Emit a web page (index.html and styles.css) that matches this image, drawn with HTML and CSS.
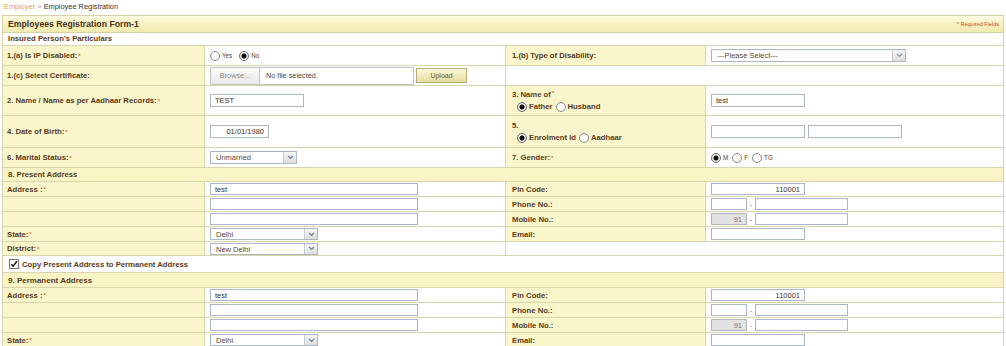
FILE: index.html
```html
<!DOCTYPE html>
<html lang="en">
<head>
    <meta charset="UTF-8">
    <title>Employee Registration</title>
    <link rel="stylesheet" href="styles.css">
</head>
<body>
    <div class="crumb"><a href="#">Employer</a> <span class="sep">&gt;</span> Employee Registration</div>

    <div class="form-box">
        <div class="form-title">
            <h1>Employees Registration Form-1</h1>
            <span class="req-note">* Required Fields</span>
        </div>
        <div class="sub-title">Insured Person's Particulars</div>

        <div class="row r20">
            <div class="cell lbl">1.(a) Is IP Disabled:<i class="req">*</i></div>
            <div class="cell fld opts-inline">
                <label class="opt"><input type="radio" name="dis"> Yes</label>
                <label class="opt"><input type="radio" name="dis" checked> No</label>
            </div>
            <div class="cell lbl">1.(b) Type of Disability:</div>
            <div class="cell fld">
                <div class="sel w195"><span class="val">---Please Select---</span><span class="arr"><svg width="7" height="5" viewBox="0 0 7 5"><path d="M1 1l2.5 2.5L6 1" fill="none" stroke="#8a9bb0" stroke-width="1.2"/></svg></span></div>
            </div>
        </div>

        <div class="row r20">
            <div class="cell lbl">1.(c) Select Certificate:</div>
            <div class="cell fld">
                <div class="file"><span class="browse">Browse...</span><span class="fname">No file selected.</span></div>
                <button class="upload">Upload</button>
            </div>
            <div class="cell fld span2"></div>
        </div>

        <div class="row r30">
            <div class="cell lbl">2. Name / Name as per Aadhaar Records:<i class="req">*</i></div>
            <div class="cell fld"><input class="txt w94" value="TEST"></div>
            <div class="cell lbl stack">
                <span>3. Name of<i class="req">*</i></span>
                <span class="opts">
                    <label class="opt big"><input type="radio" name="rel" checked> Father</label>
                    <label class="opt big"><input type="radio" name="rel"> Husband</label>
                </span>
            </div>
            <div class="cell fld"><input class="txt w94" value="test"></div>
        </div>

        <div class="row r32">
            <div class="cell lbl">4. Date of Birth:<i class="req">*</i></div>
            <div class="cell fld"><input class="txt w59 right" value="01/01/1980"></div>
            <div class="cell lbl stack">
                <span>5.</span>
                <span class="opts">
                    <label class="opt big"><input type="radio" name="idt" checked> Enrolment Id</label>
                    <label class="opt big"><input type="radio" name="idt"> Aadhaar</label>
                </span>
            </div>
            <div class="cell fld">
                <input class="txt w94">
                <input class="txt w94 gap">
            </div>
        </div>

        <div class="row r20">
            <div class="cell lbl">6. Marital Status: <i class="req">*</i></div>
            <div class="cell fld">
                <div class="sel w87"><span class="val">Unmarried</span><span class="arr"><svg width="7" height="5" viewBox="0 0 7 5"><path d="M1 1l2.5 2.5L6 1" fill="none" stroke="#6a7f99" stroke-width="1.2"/></svg></span></div>
            </div>
            <div class="cell lbl">7. Gender:<i class="req">*</i></div>
            <div class="cell fld opts-gender">
                <label class="opt"><input type="radio" name="gen" checked> M</label>
                <label class="opt"><input type="radio" name="gen"> F</label>
                <label class="opt"><input type="radio" name="gen"> TG</label>
            </div>
        </div>

        <div class="section h14">8. Present Address</div>

        <div class="row r15">
            <div class="cell lbl">Address :<i class="req">*</i></div>
            <div class="cell fld"><input class="txt sm w208" value="test"></div>
            <div class="cell lbl">Pin Code:</div>
            <div class="cell fld"><input class="txt sm w94 right" value="110001"></div>
        </div>
        <div class="row r15">
            <div class="cell lbl"></div>
            <div class="cell fld"><input class="txt sm w208"></div>
            <div class="cell lbl">Phone No.:</div>
            <div class="cell fld"><input class="txt sm w37"><span class="dash">-</span><input class="txt sm w93"></div>
        </div>
        <div class="row r15">
            <div class="cell lbl"></div>
            <div class="cell fld"><input class="txt sm w208"></div>
            <div class="cell lbl">Mobile No.:</div>
            <div class="cell fld"><input class="txt sm w37 right off" value="91" disabled><span class="dash">-</span><input class="txt sm w93"></div>
        </div>
        <div class="row r15">
            <div class="cell lbl">State:<i class="req">*</i></div>
            <div class="cell fld">
                <div class="sel sm w108"><span class="val">Delhi</span><span class="arr"><svg width="7" height="5" viewBox="0 0 7 5"><path d="M1 1l2.5 2.5L6 1" fill="none" stroke="#6a7f99" stroke-width="1.2"/></svg></span></div>
            </div>
            <div class="cell lbl">Email:</div>
            <div class="cell fld"><input class="txt sm w94"></div>
        </div>
        <div class="row r14">
            <div class="cell lbl">District:<i class="req">*</i></div>
            <div class="cell fld">
                <div class="sel sm w108"><span class="val">New Delhi</span><span class="arr"><svg width="7" height="5" viewBox="0 0 7 5"><path d="M1 1l2.5 2.5L6 1" fill="none" stroke="#6a7f99" stroke-width="1.2"/></svg></span></div>
            </div>
            <div class="cell fld span2"></div>
        </div>

        <div class="copy-row">
            <span class="check"><svg width="8" height="8" viewBox="0 0 8 8"><path d="M1.2 4.2l1.9 2L6.9 1.2" fill="none" stroke="#111" stroke-width="1.5"/></svg></span>
            Copy Present Address to Permanent Address
        </div>

        <div class="section h15 plain">9. Permanent Address</div>

        <div class="row r15">
            <div class="cell lbl">Address :<i class="req">*</i></div>
            <div class="cell fld"><input class="txt sm w208" value="test"></div>
            <div class="cell lbl">Pin Code:</div>
            <div class="cell fld"><input class="txt sm w94 right" value="110001"></div>
        </div>
        <div class="row r15">
            <div class="cell lbl"></div>
            <div class="cell fld"><input class="txt sm w208"></div>
            <div class="cell lbl">Phone No.:</div>
            <div class="cell fld"><input class="txt sm w37"><span class="dash">-</span><input class="txt sm w93"></div>
        </div>
        <div class="row r15">
            <div class="cell lbl"></div>
            <div class="cell fld"><input class="txt sm w208"></div>
            <div class="cell lbl">Mobile No.:</div>
            <div class="cell fld"><input class="txt sm w37 right off" value="91" disabled><span class="dash">-</span><input class="txt sm w93"></div>
        </div>
        <div class="row r15">
            <div class="cell lbl">State:<i class="req">*</i></div>
            <div class="cell fld">
                <div class="sel sm w108"><span class="val">Delhi</span><span class="arr"><svg width="7" height="5" viewBox="0 0 7 5"><path d="M1 1l2.5 2.5L6 1" fill="none" stroke="#6a7f99" stroke-width="1.2"/></svg></span></div>
            </div>
            <div class="cell lbl">Email:</div>
            <div class="cell fld"><input class="txt sm w94"></div>
        </div>
    </div>
</body>
</html>
```

FILE: styles.css
```css
* {
    margin: 0;
    padding: 0;
    box-sizing: border-box;
}

body {
    font-family: "Liberation Sans", Arial, sans-serif;
    font-size: 7.7px;
    color: #5a3a1a;
    background: #fff;
}

.crumb {
    height: 15px;
    padding: 1px 4px 0;
    font-size: 7.4px;
    line-height: 11px;
    color: #333;
}

.crumb a {
    color: #eea23a;
    text-decoration: none;
}

.crumb .sep {
    color: #999;
}

.form-box {
    margin: 0 2px;
}

.form-title {
    height: 18px;
    display: flex;
    align-items: center;
    justify-content: space-between;
    padding: 0 4px 0 5px;
    border: 1px solid #d6d1a6;
    background: linear-gradient(#fdfbe4, #f5f0be 55%, #f1ebb0);
}

.form-title h1 {
    font-size: 8.7px;
    font-weight: bold;
    color: #4b2f15;
}

.req-note {
    font-size: 5.5px;
    color: #d2461a;
}

.sub-title {
    height: 13px;
    line-height: 12px;
    padding-left: 5px;
    font-weight: bold;
    border-left: 1px solid #d8d4ab;
    border-right: 1px solid #d8d4ab;
    border-bottom: 1px solid #d8d4ab;
}

.row {
    display: grid;
    grid-template-columns: 202px 301px 200px 1fr;
    border-bottom: 1px solid #d8d4ab;
    border-right: 1px solid #d8d4ab;
}

.r14 { height: 14px; }
.r15 { height: 15px; }
.r20 { height: 20px; }
.r30 { height: 30px; }
.r32 { height: 32px; }

.cell {
    display: flex;
    align-items: center;
    padding: 0 4px;
    border-left: 1px solid #d8d4ab;
    white-space: nowrap;
}

.cell.fld {
    padding-left: 5px;
}

.row .cell:nth-child(3) {
    padding-left: 6px;
}

.lbl {
    background: #f9f6cb;
    font-weight: bold;
}

.fld {
    background: #fff;
}

.span2 {
    grid-column: span 2;
}

.stack {
    flex-direction: column;
    align-items: flex-start;
    justify-content: center;
    gap: 3px;
}

.req {
    font-style: normal;
    font-size: 6px;
    color: #d86a3a;
    vertical-align: top;
    margin-left: 1px;
}

/* radios */
.opt {
    display: inline-flex;
    align-items: center;
    gap: 2px;
    margin-right: 5px;
    font-size: 6.3px;
    color: #5a3a1a;
}

.opts-inline {
    padding-left: 8px;
}

.opts-inline .opt {
    margin-right: 7px;
}

.opts-gender {
    padding-left: 12px;
}

.opts-gender .opt {
    margin-right: 4px;
}

.opt.big {
    font-size: 7.7px;
    font-weight: bold;
    margin-right: 3px;
}

.opts {
    display: flex;
    padding-left: 5px;
}

.opt input {
    appearance: none;
    width: 10px;
    height: 10px;
    border: 1px solid #8d8d8d;
    border-radius: 50%;
    background: radial-gradient(circle at 50% 40%, #fff 40%, #e9e9e9 100%);
}

.opt input:checked {
    background: radial-gradient(circle, #111 0 2.2px, #e2e2e2 2.8px, #fafafa 100%);
    border-color: #6d6d6d;
}

/* text boxes */
.txt {
    height: 13px;
    border: 1px solid #a9b6c4;
    font-family: inherit;
    font-size: 7.5px;
    color: #3c3228;
    padding: 0 4px;
    background: #fff;
}

.txt.sm {
    height: 12px;
}

.txt.right {
    text-align: right;
}

.txt.off {
    background: #e2e2e2;
    border-color: #b4b4b4;
    color: #777;
}

.txt.gap {
    margin-left: 3px;
}

.w37 { width: 36px; }
.w59 { width: 59px; }
.w87 { width: 87px; }
.w93 { width: 93px; }
.w94 { width: 94px; }
.w108 { width: 108px; }
.w195 { width: 195px; }
.w208 { width: 208px; }

.dash {
    margin: 0 3px;
    font-size: 7px;
    color: #777;
}

/* select boxes */
.sel {
    display: flex;
    height: 13px;
    border: 1px solid #a9b6c4;
    background: #fff;
    font-size: 7.5px;
    color: #5c4a38;
}

.sel.sm {
    height: 12px;
}

.sel .val {
    flex: 1;
    padding-left: 5px;
    line-height: 11px;
}

.sel .arr {
    width: 13px;
    display: flex;
    align-items: center;
    justify-content: center;
    border-left: 1px solid #c6ccd4;
    background: linear-gradient(#f6f6f6, #dedede);
}

/* file picker */
.file {
    display: flex;
    height: 18px;
    width: 204px;
    border: 1px solid #c2c2c2;
    font-size: 7.3px;
}

.browse {
    width: 49px;
    display: flex;
    align-items: center;
    justify-content: center;
    color: #8a8a8a;
    border-right: 1px solid #c8c8c8;
    background: linear-gradient(#fbfbfb, #e9e9e9);
}

.fname {
    padding-left: 6px;
    line-height: 16px;
    color: #4a4a4a;
}

.upload {
    margin-left: 2px;
    width: 51px;
    height: 15px;
    border: 1px solid #b6ad78;
    background: linear-gradient(#fbf8da, #e5dd9c);
    font-family: inherit;
    font-size: 7px;
    color: #6a5a2a;
}

/* sections */
.section {
    display: flex;
    align-items: center;
    padding-left: 5px;
    font-weight: bold;
    background: #f8f4c6;
    border: 1px solid #d8d4ab;
    border-top: none;
}

.section.h14 { height: 14px; }
.section.h15 { height: 15px; font-size: 8px; }

.copy-row {
    height: 17px;
    display: flex;
    align-items: center;
    gap: 3px;
    padding-left: 6px;
    font-weight: bold;
    border-left: 1px solid #d8d4ab;
    border-right: 1px solid #d8d4ab;
    border-bottom: 1px solid #d8d4ab;
}

.check {
    width: 10px;
    height: 10px;
    display: flex;
    align-items: center;
    justify-content: center;
    border: 1px solid #777;
    background: #fff;
}
```
